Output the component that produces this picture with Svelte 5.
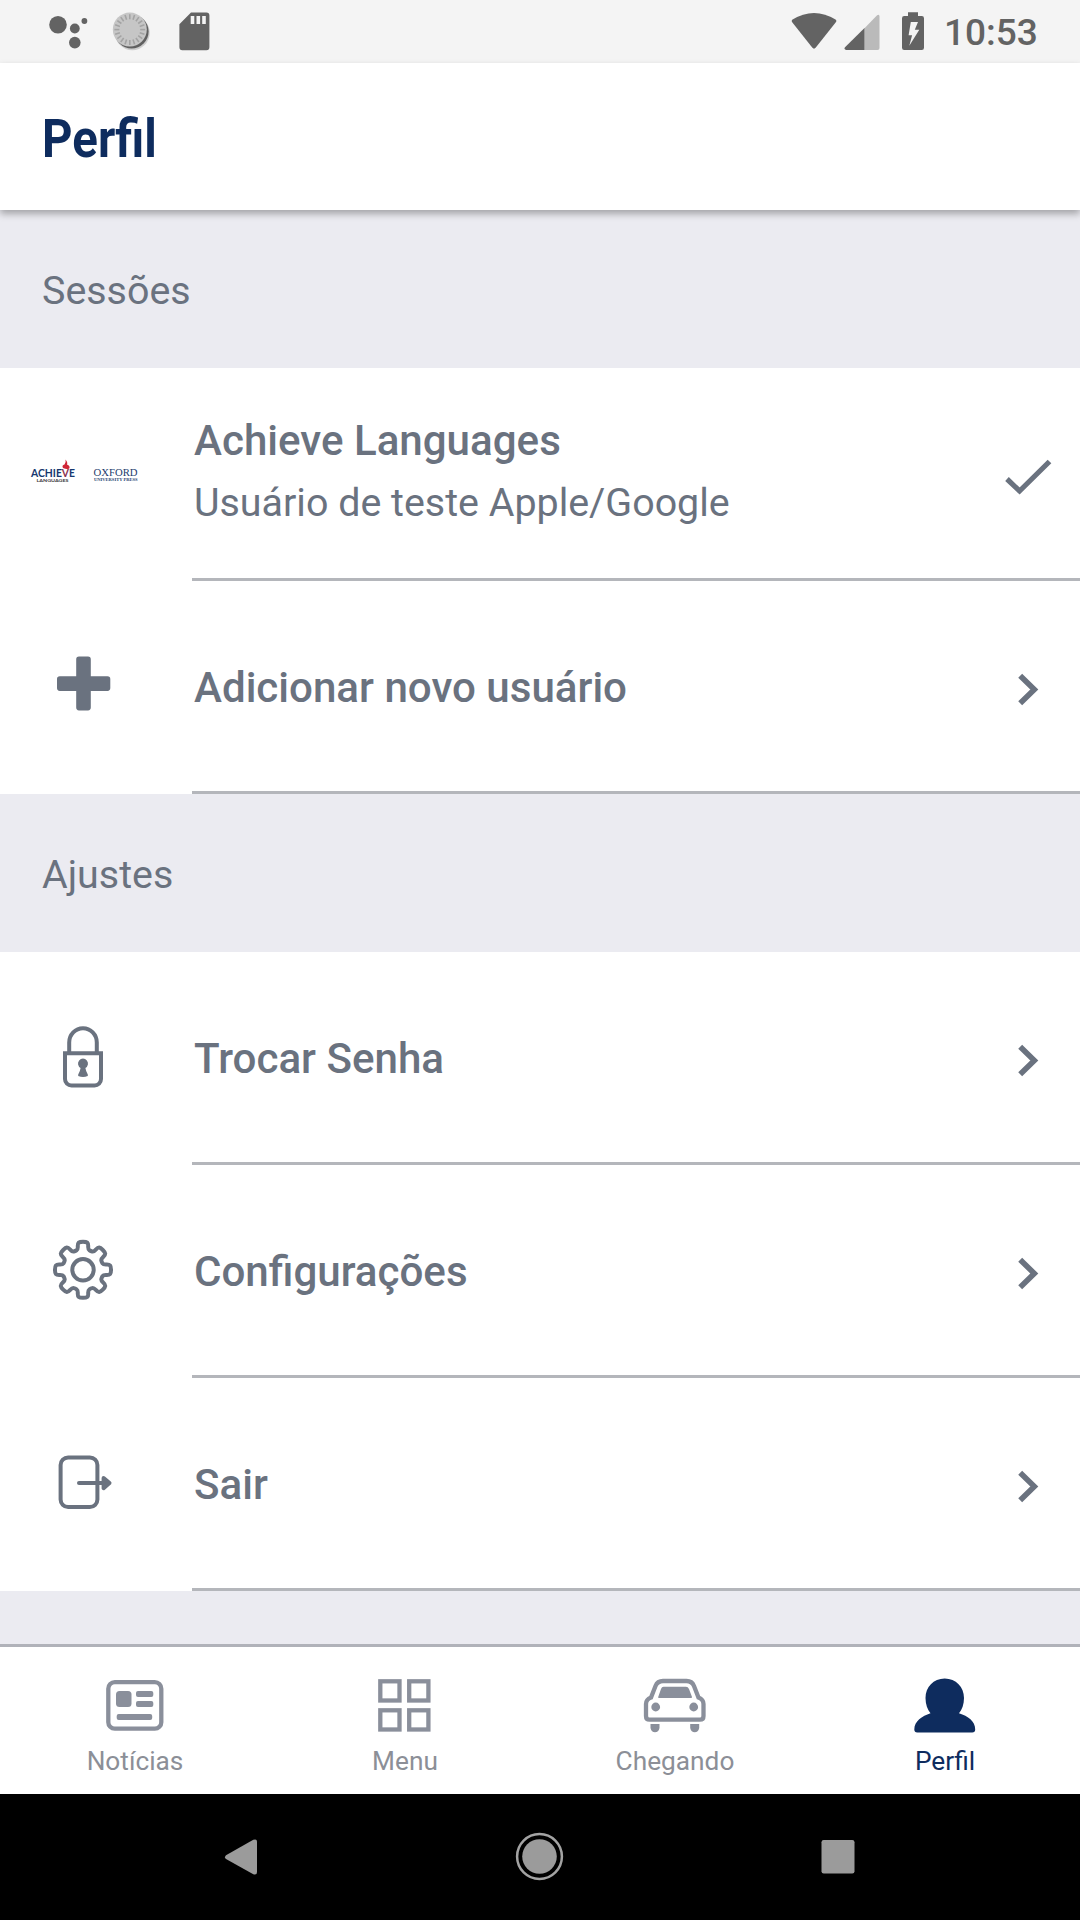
<script>
  // Outline of the eight-toothed settings gear, centred on the origin.
  function gearPath() {
    const teeth = 8;
    const profile = [
      [-22.5, 20.2],
      [-14, 21],
      [-11.5, 26.8],
      [-6.5, 28.2],
      [6.5, 28.2],
      [11.5, 26.8],
      [14, 21]
    ];
    const points = [];
    for (let i = 0; i < teeth; i++) {
      for (const [deg, r] of profile) {
        const a = ((i * 45 + deg) * Math.PI) / 180;
        points.push([Math.sin(a) * r, -Math.cos(a) * r]);
      }
    }
    const mid = (p, q) => [(p[0] + q[0]) / 2, (p[1] + q[1]) / 2];
    const fmt = (p) => p.map((v) => v.toFixed(2)).join(' ');
    let d = 'M' + fmt(mid(points[points.length - 1], points[0]));
    points.forEach((p, i) => {
      d += 'Q' + fmt(p) + ' ' + fmt(mid(p, points[(i + 1) % points.length]));
    });
    return d + 'Z';
  }

  const gear = gearPath();
  const ticks = Array.from({ length: 20 }, (_, i) => i * 18);

  const sections = [
    {
      title: 'Sessões',
      rows: [
        { icon: 'logo', label: 'Achieve Languages', detail: 'Usuário de teste Apple/Google', selected: true },
        { icon: 'plus', label: 'Adicionar novo usuário' }
      ]
    },
    {
      title: 'Ajustes',
      rows: [
        { icon: 'lock', label: 'Trocar Senha' },
        { icon: 'gear', label: 'Configurações' },
        { icon: 'exit', label: 'Sair' }
      ]
    }
  ];

  const tabs = [
    { icon: 'news', label: 'Notícias' },
    { icon: 'menu', label: 'Menu' },
    { icon: 'car', label: 'Chegando' },
    { icon: 'person', label: 'Perfil', active: true }
  ];
</script>

<div class="screen">
  <div class="status">
    <svg class="dots" width="40" height="40" viewBox="49 12 40 40">
      <circle cx="58" cy="24.7" r="8.8" /><circle cx="74.8" cy="28.5" r="4.9" />
      <circle cx="74.8" cy="42.6" r="5.8" /><circle cx="84.4" cy="21" r="2.9" />
    </svg>
    <svg class="disc" width="40" height="40" viewBox="112 12 40 40">
      <circle cx="132.3" cy="32.8" r="17.4" fill="#bdbdbd" opacity=".7" />
      <circle cx="131.6" cy="31.6" r="17" fill="#606060" />
      <circle cx="129.8" cy="29.6" r="17" fill="#c6c6c6" />
      {#each ticks as t}
        <path d="M129.8 14.2v5" stroke="#a3a3a3" stroke-width="1.6" transform={`rotate(${t} 129.8 29.6)`} />
      {/each}
    </svg>
    <svg class="sd" width="32" height="40" viewBox="178 12 32 40">
      <path fill-rule="evenodd" d="M191 12.6h15.4a3 3 0 0 1 3 3v31.7a3 3 0 0 1-3 3h-24a3 3 0 0 1-3-3V24.2zM190.7 16v8h3.6v-8zm5.8 0v8h3.6v-8zm5.7 0v8h3.6v-8z" />
    </svg>
    <span class="grow"></span>
    <svg class="wifi" width="46" height="40" viewBox="791 12 46 40">
      <path d="M792.2 19.8Q814 6.3 835.9 19.8Q836.7 20.8 836 22L815.8 47.6Q814 49.8 812.2 47.6L792 22Q791.4 20.8 792.2 19.8z" />
    </svg>
    <svg class="cell" width="36" height="40" viewBox="843.5 12 36 40">
      <path fill="#bababa" d="M864 28.2L876.6 15.3Q879 13.8 879 16.5V48Q879 50 877 50H864z" />
      <path d="M864 28V50H845.5Q843 49.2 844.5 47.2z" />
    </svg>
    <svg class="battery" width="24" height="40" viewBox="901 12 24 40">
      <path fill-rule="evenodd" d="M908 12.2h10v3.9h3.8a2.2 2.2 0 0 1 2.2 2.2v29.5a2.2 2.2 0 0 1-2.2 2.2h-17.6a2.2 2.2 0 0 1-2.2-2.2V18.3a2.2 2.2 0 0 1 2.2-2.2h3.8zM910.8 22L908.6 35.2h3.5L909.3 45.8 919.3 29.8h-4.5L918 22z" />
    </svg>
    <span class="time">10:53</span>
  </div>

  <header><h1>Perfil</h1></header>

  <main>
    {#each sections as section}
      <h2>{section.title}</h2>
      {#each section.rows as row}
        <div class="row">
          <div class="lead">
            {#if row.icon === 'logo'}
              <svg class="logo" width="112" height="30" viewBox="27 456 112 30">
                <text x="31" y="477" class="ach" textLength="44" lengthAdjust="spacingAndGlyphs">ACHIE<tspan fill="#8c3450">V</tspan>E</text>
                <text x="36.5" y="482" class="lang" textLength="32" lengthAdjust="spacingAndGlyphs">LANGUAGES</text>
                <path fill="#d02537" d="M65.5 459.5Q68 462.5 67 464.6Q70.5 466 69.3 468.4Q67 470 63 468Q61.5 465.3 64.5 464.6Q66.3 462.5 65.5 459.5z" />
                <text x="93.5" y="476" class="oxf" textLength="44" lengthAdjust="spacingAndGlyphs">OXFORD</text>
                <text x="94" y="481.3" class="press" textLength="43.5" lengthAdjust="spacingAndGlyphs">UNIVERSITY PRESS</text>
              </svg>
            {:else}
              <svg width="68" height="68" viewBox="-34 -34 68 68">
                {#if row.icon === 'plus'}
                  <path class="solid" d="M-4-31.4H5A2.8 2.8 0 0 1 7.8-28.6V-11.7H24.500A2.800 2.800 0 0 1 27.300-8.900V.100A2.800 2.800 0 0 1 24.500 2.900H7.800V19.600A2.800 2.800 0 0 1 5 22.400H-4A2.800 2.800 0 0 1-6.800 19.600V2.900H-23.200A2.800 2.800 0 0 1-26 .100V-8.900A2.800 2.800 0 0 1-23.200-11.700H-6.800V-28.600A2.800 2.800 0 0 1-4-31.400z" />
                {:else if row.icon === 'lock'}
                  <g class="line">
                    <path d="M-13.800-6V-16.500A13.800 14.300 0 0 1 13.800-16.500V-6" />
                    <path d="M-18-5.800H18V20A6.500 6.500 0 0 1 11.500 26.500H-11.500A6.500 6.500 0 0 1-18 20z" />
                  </g>
                  <path class="solid" d="M-2.400 9A5 5 0 1 1 2.400 9Q2.800 12 4.800 15.500V17Q0 18.800-4.800 17V15.500Q-2.800 12-2.400 9z" />
                {:else if row.icon === 'gear'}
                  <g class="line" transform="translate(0 -2.200)"><path d={gear} /><circle r="10.700" /></g>
                {:else}
                  <g class="line">
                    <rect x="-22.400" y="-27.600" width="36.800" height="49.600" rx="7.500" />
                    <path d="M-4-1.900H24" stroke-linecap="round" />
                  </g>
                  <path class="solid arrow" d="M20.600-7L26.500-1.900L20.600 3.200V-7z" />
                {/if}
              </svg>
            {/if}
          </div>
          <div class="body" class:single={!row.detail}>
            <div class="texts">
              <span class="label">{row.label}</span>
              {#if row.detail}<span class="detail">{row.detail}</span>{/if}
            </div>
            {#if row.selected}
              <svg class="mark check" width="52" height="52" viewBox="1002 452 52 52"><path d="M1007 479L1019.600 491L1049.500 461.500" /></svg>
            {:else}
              <svg class="mark" width="52" height="52" viewBox="1002.500 663 52 52"><path class="chev" d="M1020.700 675.700L1034.800 689.500L1020.700 703.300" /></svg>
            {/if}
          </div>
        </div>
      {/each}
    {/each}
  </main>

  <nav class="tabs">
    {#each tabs as tab}
      <div class="tab" class:active={tab.active}>
        <svg width="68" height="60" viewBox="-34 0 68 60">
          {#if tab.icon === 'news'}
            <rect class="o" x="-26.700" y="7.200" width="53" height="46.500" rx="6.500" />
            <rect x="-19" y="16" width="15.500" height="16" rx="3.500" />
            <rect x="1" y="16" width="17.300" height="6" rx="2" />
            <rect x="1" y="26" width="17.300" height="6" rx="2" />
            <rect x="-18.300" y="39" width="35.500" height="6" rx="2" />
          {:else if tab.icon === 'menu'}
            <g class="o">
              <rect x="-24.700" y="6.300" width="19.200" height="19.200" /><rect x="4.200" y="6.300" width="19.200" height="19.200" />
              <rect x="-24.700" y="35.300" width="19.200" height="19.200" /><rect x="4.200" y="35.300" width="19.200" height="19.200" />
            </g>
          {:else if tab.icon === 'car'}
            <path class="o" d="M-12 6H11.500Q17 6 19 11L23.500 22.500Q28.500 24.500 28.500 29V41Q28.500 44.700 25 44.700H-25.500Q-29 44.700-29 41V29Q-29 24.500-24 22.500L-19.500 11Q-17.500 6-12 6z" />
            <path d="M-11.500 11.700H11Q13 11.700 14 14L17 22Q17.300 23 16 23H-16Q-17.200 23-16.800 22L-14 14Q-13.200 11.700-11.500 11.700z" />
            <circle cx="-19.300" cy="32" r="4.400" /><circle cx="18.700" cy="32" r="4.400" />
            <path d="M-24.500 49H-15.500V53Q-16.500 57.300-20 57.300T-24.500 53zM15.200 49H24.200V53Q23.200 57.300 19.700 57.300T15.200 53z" />
          {:else}
            <path d="M-.300 3.500C11 3.500 19 12 19 23C19 29.500 17 34.500 14 38.200C23 41 30.200 46 30.200 54.500Q30.200 57.500 27.200 57.500H-27.700Q-30.700 57.500-30.700 54.500C-30.700 46-23 41-14.500 38.200C-17.500 34.500-19.500 29.500-19.500 23C-19.500 12-11.500 3.500-.300 3.500z" />
          {/if}
        </svg>
        <span>{tab.label}</span>
      </div>
    {/each}
  </nav>

  <div class="system">
    <svg width="52" height="52" viewBox="215 1831 52 52"><path d="M226 1855.300L253.300 1839.800Q257 1838.500 257 1841.500V1872Q257 1875.500 253.300 1874.300L226 1859Q224 1857.200 226 1855.300z" /></svg>
    <svg width="52" height="52" viewBox="514 1831 52 52"><circle class="ring" cx="539.500" cy="1856.500" r="22.400" /><circle cx="539.500" cy="1856.500" r="17.300" /></svg>
    <svg width="52" height="52" viewBox="812 1831 52 52"><rect x="821.500" y="1840" width="33" height="33.500" rx="2.200" /></svg>
  </div>
</div>

<style>
  :global(body) { margin: 0; }
  .screen {
    width: 1080px;
    height: 1920px;
    display: flex;
    flex-direction: column;
    overflow: hidden;
    background: #ebebf1;
    font-family: Roboto, sans-serif;
    color: #6a727f;
  }
  svg { display: block; flex: none; }

  .status {
    height: 63px;
    flex: none;
    box-sizing: border-box;
    display: flex;
    align-items: flex-start;
    padding: 12px 43px 0 49px;
    background: #f4f4f4;
    fill: #636363;
    color: #636363;
  }
  .disc { margin-left: 23px; }
  .sd { margin-left: 26px; }
  .grow { flex: 1; }
  .cell { margin-left: 6.5px; }
  .battery { margin-left: 21.5px; }
  .time {
    width: 93px;
    margin-left: 19px;
    font-size: 37px;
    line-height: 44px;
    font-weight: 500;
    margin-top: -1px;
    white-space: nowrap;
  }

  header {
    height: 147px;
    flex: none;
    box-sizing: border-box;
    padding: 45px 0 0 41.5px;
    background: #fff;
    box-shadow: 0 4px 7px rgba(0, 0, 0, 0.3);
    position: relative;
    z-index: 1;
  }
  h1 {
    margin: 0;
    font-size: 53px;
    line-height: 62px;
    font-weight: 700;
    color: #0e2c5e;
    transform: scaleX(0.895);
    transform-origin: 0 0;
  }

  main { flex: 1; }
  h2 {
    margin: 0;
    height: 158px;
    box-sizing: border-box;
    padding: 2px 42px 0;
    font-size: 39.4px;
    line-height: 158px;
    font-weight: 400;
  }
  .row {
    height: 213px;
    display: flex;
    background: #fff;
  }
  .lead {
    width: 192px;
    box-sizing: border-box;
    padding-right: 26px;
    display: flex;
    align-items: center;
    justify-content: center;
  }
  .logo { margin-bottom: 7px; }
  .ach { font: 700 11px Lato, sans-serif; fill: #16386f; }
  .lang { font: 700 4.5px Lato, sans-serif; fill: #3b3b40; }
  .oxf { font: 10.5px 'Liberation Serif', serif; fill: #1b3c6c; }
  .press { font: 700 4px 'Liberation Serif', serif; fill: #24426f; }
  .solid { fill: #6a727f; }
  .arrow { stroke: #6a727f; stroke-width: 4; stroke-linejoin: round; }
  .line { fill: none; stroke: #6a727f; stroke-width: 4; }
  .body {
    flex: 1;
    display: flex;
    align-items: center;
    justify-content: space-between;
    padding-right: 26px;
    border-bottom: 3px solid #b4b6bb;
  }
  .texts { display: flex; flex-direction: column; padding: 0 0 2px 2px; }
  .single .texts { padding: 4px 0 0 2px; }
  .label { font-size: 42.1px; line-height: 62px; font-weight: 500; }
  .detail { font-size: 39.4px; line-height: 62px; }
  .mark { fill: none; stroke: #6a727f; stroke-width: 5.2; margin-top: 6px; }
  .check { margin-top: 10px; }
  .chev { stroke-width: 5.6; }

  .tabs {
    height: 150px;
    flex: none;
    box-sizing: border-box;
    border-top: 3px solid #b0b2b9;
    background: #fff;
    display: grid;
    grid-template-columns: repeat(4, 1fr);
  }
  .tab {
    display: flex;
    flex-direction: column;
    align-items: center;
    padding-top: 28px;
    fill: #8a8f9b;
    color: #8c8f97;
    font-size: 26.25px;
    line-height: 32px;
  }
  .tab span { margin-top: 10px; }
  .o { fill: none; stroke: #8a8f9b; stroke-width: 4.3; }
  .active { fill: #0e2c5e; color: #0e2c5e; }

  .system {
    height: 126px;
    flex: none;
    box-sizing: border-box;
    padding: 0 216px 0 215px;
    display: flex;
    align-items: center;
    justify-content: space-between;
    background: #000;
    fill: #9b9b9b;
  }
  .ring { fill: none; stroke: #a3a3a3; stroke-width: 2.5; }
</style>
